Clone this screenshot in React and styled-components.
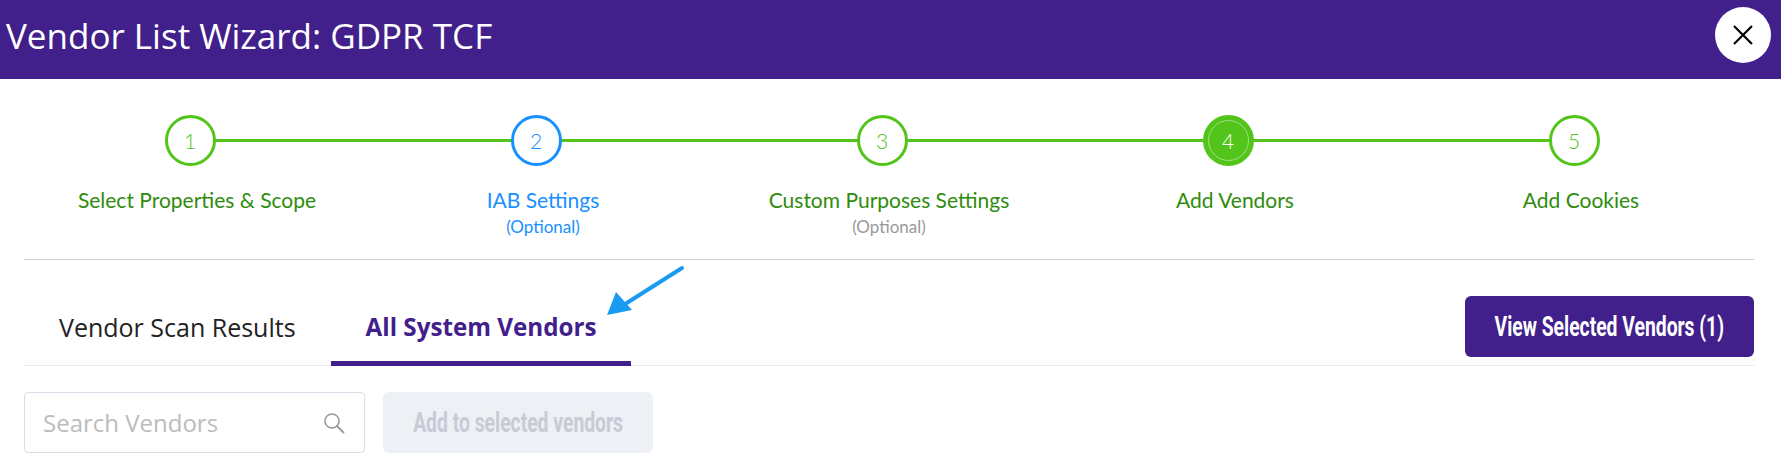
import React from "react"
import styled, { createGlobalStyle } from "styled-components"

const colors = {
  purple: "#41208b",
  green: "#52c41a",
  greenText: "#2f8c0c",
  blue: "#1890ff",
  grey: "#999999",
}

const GlobalStyle = createGlobalStyle`
  html, body {
    margin: 0;
    padding: 0;
    background: #ffffff;
  }
  body {
    font-family: "Open Sans", "Liberation Sans", sans-serif;
  }
`

const steps = [
  { num: 1, label: "Select Properties & Scope", state: "done" },
  { num: 2, label: "IAB Settings", state: "optional", note: "(Optional)" },
  { num: 3, label: "Custom Purposes Settings", state: "done", note: "(Optional)", noteGrey: true },
  { num: 4, label: "Add Vendors", state: "active" },
  { num: 5, label: "Add Cookies", state: "done" },
]

const App = () => {
  return (
    <>
      <GlobalStyle />
      <Page>
        <Header>
          <h1>Vendor List Wizard: GDPR TCF</h1>
          <CloseButton aria-label="Close">
            <svg width="22" height="22" viewBox="0 0 22 22">
              <path d="M2 2 L20 20 M20 2 L2 20" stroke="#000" strokeWidth="2.2" fill="none" />
            </svg>
          </CloseButton>
        </Header>

        <Body>
          <Stepper>
            {steps.map((s, i) => (
              <Step key={s.num}>
                <StepHead $last={i === steps.length - 1}>
                  <Circle $state={s.state}>{s.num}</Circle>
                </StepHead>
                <StepLabel $blue={s.state === "optional"}>{s.label}</StepLabel>
                {s.note && <StepNote $grey={s.noteGrey}>{s.note}</StepNote>}
              </Step>
            ))}
          </Stepper>

          <TabBar>
            <Tabs>
              <Tab>Vendor Scan Results</Tab>
              <Tab $active>All System Vendors</Tab>
            </Tabs>
            <PrimaryButton>
              <Narrow>View Selected Vendors (1)</Narrow>
            </PrimaryButton>
            <Pointer width="90" height="56" viewBox="0 0 90 56">
              <path d="M82 4 L22 42" stroke="#1a9bf2" strokeWidth="4" strokeLinecap="round" />
              <path d="M7 51 L16 28 L32 46 Z" fill="#1a9bf2" />
            </Pointer>
          </TabBar>

          <Toolbar>
            <SearchBox>
              <input placeholder="Search Vendors" />
              <svg width="22" height="22" viewBox="0 0 22 22">
                <circle cx="9" cy="9" r="7" stroke="#9a9a9a" strokeWidth="1.6" fill="none" />
                <path d="M14 14 L20.5 20.5" stroke="#9a9a9a" strokeWidth="1.8" strokeLinecap="round" />
              </svg>
            </SearchBox>
            <DisabledButton disabled>
              <Narrow>Add to selected vendors</Narrow>
            </DisabledButton>
          </Toolbar>
        </Body>
      </Page>
    </>
  )
}

const Page = styled.div`
  width: 1781px;
  height: 464px;
  overflow: hidden;
  background: #ffffff;
`

const Header = styled.header`
  display: flex;
  justify-content: space-between;
  align-items: flex-start;
  height: 79px;
  padding: 7px 10px 0 6px;
  box-sizing: border-box;
  background-color: ${colors.purple};

  h1 {
    margin: 6px 0 0;
    font-family: "Open Sans", sans-serif;
    font-size: 35px;
    font-weight: 400;
    line-height: 46px;
    color: #ffffff;
  }
`

const CloseButton = styled.button`
  display: flex;
  align-items: center;
  justify-content: center;
  width: 56px;
  height: 56px;
  padding: 0;
  border: none;
  border-radius: 50%;
  background: #ffffff;
`

const Body = styled.div`
  padding: 0 27px 0 24px;
`

const Stepper = styled.div`
  display: grid;
  grid-template-columns: repeat(5, 1fr);
  padding-top: 36px;
  height: 181px;
  box-sizing: border-box;
  border-bottom: 1px solid #cfcfcf;
`

const Step = styled.div`
  display: flex;
  flex-direction: column;
  align-items: center;
`

const StepHead = styled.div`
  position: relative;
  display: flex;
  justify-content: center;
  width: 100%;
  padding-right: 14px;
  box-sizing: border-box;

  &::after {
    content: "";
    display: ${(p) => (p.$last ? "none" : "block")};
    position: absolute;
    left: calc(50% - 7px);
    top: 24px;
    width: 100%;
    height: 3px;
    background: ${colors.green};
  }
`

const Circle = styled.div`
  position: relative;
  z-index: 1;
  display: flex;
  align-items: center;
  justify-content: center;
  width: 51px;
  height: 51px;
  box-sizing: border-box;
  border-radius: 50%;
  border: 3px solid ${(p) => (p.$state === "optional" ? colors.blue : colors.green)};
  background: ${(p) => (p.$state === "active" ? colors.green : "#ffffff")};
  color: ${(p) =>
    p.$state === "active" ? "#ffffff" : p.$state === "optional" ? colors.blue : colors.green};
  font-family: "Lato", sans-serif;
  font-size: 21px;
  font-weight: 300;

  &::before {
    content: "";
    display: ${(p) => (p.$state === "active" ? "block" : "none")};
    position: absolute;
    inset: 2px;
    border-radius: 50%;
    border: 1px solid rgba(255, 255, 255, 0.45);
  }
`

const StepLabel = styled.div`
  margin-top: 21px;
  font-family: "Lato", sans-serif;
  font-size: 21px;
  line-height: 25px;
  color: ${(p) => (p.$blue ? colors.blue : colors.greenText)};
`

const StepNote = styled.div`
  margin-top: 5px;
  font-family: "Lato", sans-serif;
  font-size: 17px;
  line-height: 20px;
  color: ${(p) => (p.$grey ? colors.grey : colors.blue)};
`

const TabBar = styled.div`
  position: relative;
  display: flex;
  justify-content: space-between;
  align-items: flex-end;
  padding-top: 36px;
  border-bottom: 1px solid #ebebeb;
`

const Tabs = styled.div`
  display: flex;
`

const Tab = styled.div`
  margin-bottom: -1px;
  padding: 0 35px 17px;
  border-bottom: 5px solid ${(p) => (p.$active ? colors.purple : "transparent")};
  font-family: "Open Sans", sans-serif;
  font-size: ${(p) => (p.$active ? "24.2px" : "25px")};
  line-height: 34px;
  font-weight: ${(p) => (p.$active ? 700 : 400)};
  color: ${(p) => (p.$active ? colors.purple : "#222222")};
`

const Narrow = styled.span`
  display: inline-block;
  white-space: nowrap;
  font-family: "Roboto", sans-serif;
  font-size: 28px;
  font-weight: 700;
  transform: scaleX(0.69);
`

const PrimaryButton = styled.button`
  display: flex;
  align-items: center;
  justify-content: center;
  width: 289px;
  height: 61px;
  margin-bottom: 8px;
  padding: 0;
  border: none;
  border-radius: 6px;
  background: ${colors.purple};
  color: #ffffff;
`

const Pointer = styled.svg`
  position: absolute;
  left: 576px;
  top: 4px;
`

const Toolbar = styled.div`
  display: flex;
  gap: 18px;
  padding-top: 26px;
`

const SearchBox = styled.label`
  display: flex;
  align-items: center;
  width: 341px;
  height: 61px;
  box-sizing: border-box;
  padding: 0 19px 0 18px;
  border: 1px solid #d6dfe9;
  border-radius: 4px;

  input {
    flex: 1;
    min-width: 0;
    border: none;
    outline: none;
    padding: 0;
    font-family: "Open Sans", sans-serif;
    font-size: 24px;
    color: #333;
  }
  input::placeholder {
    color: #bcbcbc;
  }
`

const DisabledButton = styled.button`
  display: flex;
  align-items: center;
  justify-content: center;
  width: 270px;
  height: 61px;
  padding: 0;
  border: none;
  border-radius: 6px;
  background: #edf0f5;
  color: #c6cbd6;
`

export default App
